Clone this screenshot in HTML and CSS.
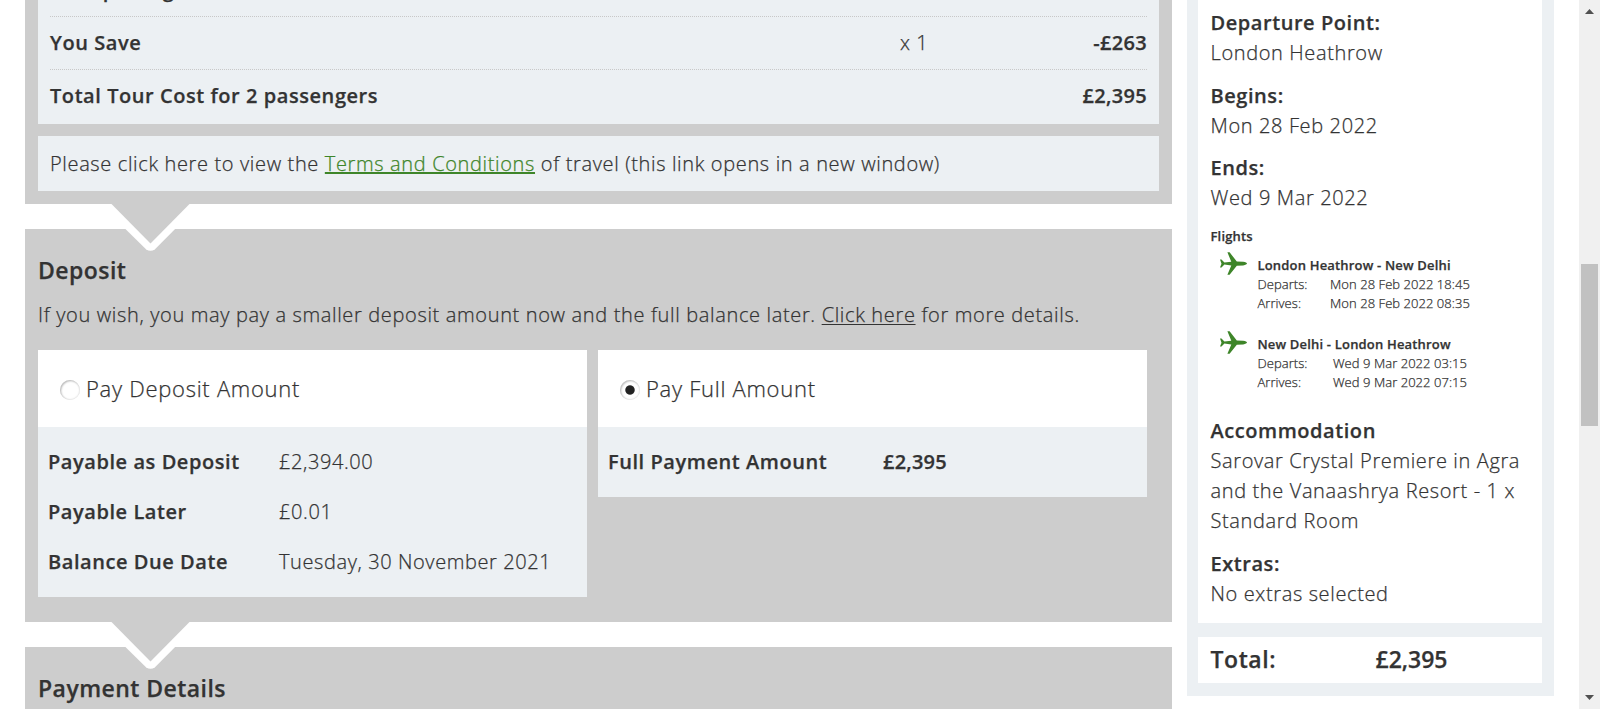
FILE: index.html
```html
<!DOCTYPE html>
<html lang="en">
<head>
<meta charset="utf-8">
<title>Booking</title>
<link rel="stylesheet" href="styles.css">
</head>
<body>
<svg class="defs" width="0" height="0">
  <symbol id="plane" viewBox="0 0 27 23">
    <path d="M0 7.6h1.500l2.900 3 6.900-.8L7.400.300h2.200l7.200 9.200 6.400.3c2.400.3 3.800 1 3.800 1.800s-1.400 1.500-3.800 1.800l-6.400.3-7.200 9H7.400l3.900-9.300-6.900-.8-2.900 2.900H0l1.500-3.700z"/>
  </symbol>
  <symbol id="arrow" viewBox="0 0 100 50">
    <path class="arrow-edge" d="M0 0 46 45.200Q50.500 48.500 55 45.200L100 0z"/>
    <path class="arrow-fill" d="M11.500 0 50.500 39.500 89.500 0z"/>
  </symbol>
</svg>
<div class="page">
  <main class="main">
    <section class="panel costs">
      <div class="box rows">
        <div class="row"><b>Tour package</b><span></span><b></b></div>
        <div class="row"><b>You Save</b><span class="qty">x 1</span><b class="amount">-£263</b></div>
        <div class="row"><b>Total Tour Cost for 2 passengers</b><span></span><b class="amount">£2,395</b></div>
      </div>
      <p class="box terms">Please click here to view the <a class="green" href="#">Terms and Conditions</a> of travel (this link opens in a new window)</p>
      <svg class="arrow"><use href="#arrow"/></svg>
    </section>
    <section class="panel deposit">
      <h2>Deposit</h2>
      <p class="note">If you wish, you may pay a smaller deposit amount now and the full balance later. <a href="#">Click here</a> for more details.</p>
      <div class="options">
        <div class="card">
          <label class="option"><span class="radio"></span>Pay Deposit Amount</label>
          <dl class="details">
            <dt>Payable as Deposit</dt><dd>£2,394.00</dd>
            <dt>Payable Later</dt><dd>£0.01</dd>
            <dt>Balance Due Date</dt><dd>Tuesday, 30 November 2021</dd>
          </dl>
        </div>
        <div class="card">
          <label class="option"><span class="radio checked"></span>Pay Full Amount</label>
          <dl class="details full">
            <dt>Full Payment Amount</dt><dd><b>£2,395</b></dd>
          </dl>
        </div>
      </div>
      <svg class="arrow"><use href="#arrow"/></svg>
    </section>
    <section class="panel payment">
      <h2>Payment Details</h2>
    </section>
  </main>
  <aside class="side">
    <div class="summary">
      <div class="item"><b>Departure Point:</b><br>London Heathrow</div>
      <div class="item"><b>Begins:</b><br>Mon 28 Feb 2022</div>
      <div class="item"><b>Ends:</b><br>Wed 9 Mar 2022</div>
      <div class="flights">
        <b>Flights</b>
        <div class="flight">
          <svg class="plane"><use href="#plane"/></svg>
          <div class="leg">
            <b>London Heathrow - New Delhi</b>
            <span>Departs:</span><span class="when">Mon 28 Feb 2022 18:45</span>
            <span>Arrives:</span><span class="when">Mon 28 Feb 2022 08:35</span>
          </div>
        </div>
        <div class="flight">
          <svg class="plane"><use href="#plane"/></svg>
          <div class="leg">
            <b>New Delhi - London Heathrow</b>
            <span>Departs:</span><span class="when">Wed 9 Mar 2022 03:15</span>
            <span>Arrives:</span><span class="when">Wed 9 Mar 2022 07:15</span>
          </div>
        </div>
      </div>
      <div class="item stay"><b>Accommodation</b><br>Sarovar Crystal Premiere in Agra and the Vanaashrya Resort - 1 x Standard Room</div>
      <div class="item"><b>Extras:</b><br>No extras selected</div>
    </div>
    <div class="total"><b>Total:</b><b class="sum">£2,395</b></div>
  </aside>
  <div class="scrollbar">
    <svg width="9" height="5"><path d="M0 5 4.500 0 9 5z"/></svg>
    <div class="thumb"></div>
    <svg width="9" height="5"><path d="M0 0 4.500 5 9 0z"/></svg>
  </div>
</div>
</body>
</html>
```
FILE: styles.css
```css
* { box-sizing: border-box; }
body {
  margin: 0;
  background: #fff;
  color: #333;
  font: 300 20px/30px "Open Sans", sans-serif;
  letter-spacing: 0.6px;
  -webkit-text-stroke: 0.25px;
  overflow: hidden;
}
b, h2, dt { font-weight: 600; letter-spacing: 0.56px; }
p, h2, dl, dd { margin: 0; }
a { color: inherit; text-decoration: underline; text-decoration-thickness: 1px; text-underline-offset: 2px; text-decoration-skip-ink: none; }
.green { color: #3e8529; text-decoration-thickness: 2px; text-underline-offset: 1px; }
.defs { position: absolute; }

.page { display: flex; height: 709px; overflow: hidden; }
.main { width: 1147px; margin-left: 25px; display: flex; flex-direction: column; gap: 25px; }
.panel { position: relative; flex: none; background: #cdcdcd; padding: 0 13px 13px; }
.box { background: #ecf0f3; padding: 0 12px; }

.costs { height: 204px; display: flex; flex-direction: column; justify-content: flex-end; gap: 12px; }
.row { display: grid; grid-template-columns: 850px 1fr auto; height: 53px; padding-top: 11px; border-bottom: 1px dotted #c8c8c8; }
.row:last-child { height: 54px; border: 0; }
.amount { letter-spacing: 0.3px; }
.qty { letter-spacing: 0.6px; }
.terms { padding: 13px 12px 12px; letter-spacing: 0.64px; }

.arrow { position: absolute; top: 100%; left: 75px; width: 100px; height: 50px; z-index: 1; }
.arrow-edge { fill: #fff; }
.arrow-fill { fill: #cdcdcd; }

.deposit { height: 393px; padding-top: 25px; }
.payment { height: 100px; padding-top: 25px; }
h2 { font-size: 23px; line-height: 32px; letter-spacing: 0.45px; }
.note { margin-top: 14px; letter-spacing: 0.65px; }
.options { display: grid; grid-template-columns: 549px 549px; gap: 11px; margin-top: 20px; align-items: start; }
.card { background: #ecf0f3; }
.option { display: flex; align-items: center; gap: 6px; height: 77px; padding: 0 0 2px 22px; background: #fff; font-size: 22px; letter-spacing: 0.72px; }
.radio { width: 20px; height: 20px; margin-top: 4px; border-radius: 50%; background: #fff; box-shadow: inset 1px 1px 2px #bbb, inset 0 0 2px #ccc; }
.checked { background: radial-gradient(circle, #222 4.200px, #fff 5.200px); }
.details { display: grid; grid-template-columns: 231px 1fr; row-gap: 20px; padding: 20px 10px; }
.full { grid-template-columns: 275px 1fr; }
.details b { letter-spacing: 0.2px; }

.side { width: 367px; height: 696px; margin-left: 15px; padding: 0 12px 13px 11px; background: #ecf0f3; display: flex; flex-direction: column; gap: 14px; }
.summary { height: 623px; padding: 8px 10px 0 12.500px; background: #fff; }
.item { margin-bottom: 12.700px; letter-spacing: 0.63px; }
.flights { font-size: 13px; line-height: 19px; letter-spacing: 0.05px; padding-top: 1px; }
.flights b { letter-spacing: 0.18px; display: block; }
.flight { display: flex; margin-left: 9px; height: 79px; padding-top: 10px; }
.plane { width: 27px; height: 23px; margin: -4px 11px 0 0; fill: #3e8529; }
.leg { display: grid; grid-template-columns: 72px 141px; grid-auto-rows: 19px; }
.leg b { grid-column: 1 / 3; white-space: nowrap; }
.when { text-align: center; }
.stay { margin-top: 12px; }
.total { height: 46px; padding: 6px 12.500px; background: #fff; display: flex; font-size: 23px; line-height: 32px; }
.total b { width: 165px; flex: none; }
.total .sum { letter-spacing: 0; }

.scrollbar { width: 21px; margin-left: 25px; padding: 9px 2px 9px; background: #f0f0f0; display: flex; flex-direction: column; align-items: center; justify-content: space-between; fill: #505050; }
.thumb { width: 17px; height: 162px; margin-bottom: 19px; background: #c1c1c1; }
```
